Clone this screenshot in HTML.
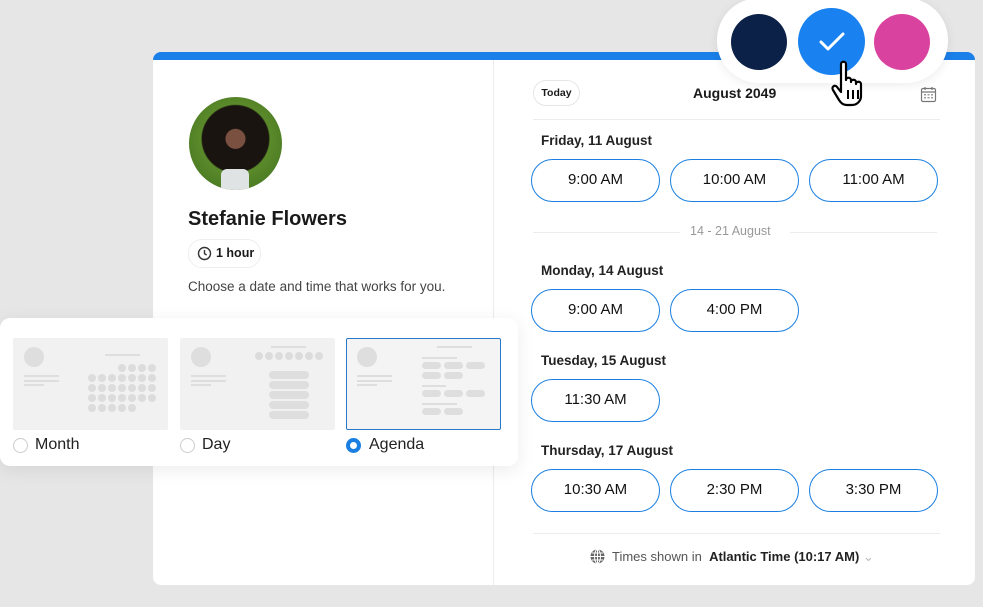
<!DOCTYPE html>
<html><head><style>
*{box-sizing:border-box;margin:0;padding:0}
body{width:983px;height:607px;background:#e6e6e7;font-family:"Liberation Sans",sans-serif;position:relative;overflow:hidden;color:#1a1a1a}
.abs{position:absolute}
.card{left:153px;top:52px;width:822px;height:533px;background:#fff;border-radius:8px;border-top:8px solid #1a7fe8;overflow:hidden}
.btn{position:absolute;width:129px;height:43px;border:1.5px solid #1a7fe0;border-radius:22px;text-align:center;line-height:40px;font-size:15px;color:#111}
.day{position:absolute;left:541px;font-size:13.5px;font-weight:bold;color:#222}
.line{position:absolute;height:1px;background:#ececec}
.th{position:absolute;top:338px;width:155px;height:92px;background:#f1f1f1;border-radius:2px}
.g{position:absolute;background:#dedede}
.radio{position:absolute;width:15px;height:15px;border:1px solid #ccc;border-radius:50%;background:#fff}
.lbl{position:absolute;font-size:16px;color:#222;top:436px}
</style></head><body>
<div class="abs card"></div>
<div class="abs" style="left:493px;top:60px;width:1px;height:525px;background:#ececec"></div>
<!-- avatar -->
<div class="abs" style="left:189px;top:97px;width:93px;height:93px;border-radius:50%;background:radial-gradient(circle at 50% 45%,#7a5040 0 14%,#1a1410 15% 48%,#5a8a2a 50%,#3f6e1d 100%);overflow:hidden">
<div class="abs" style="left:32px;top:72px;width:28px;height:25px;background:#dfe3e4;border-radius:6px 6px 0 0"></div>
</div>
<div class="abs" style="left:188px;top:208px;font-size:20px;font-weight:bold">Stefanie Flowers</div>
<div class="abs" style="left:188px;top:239px;width:73px;height:29px;border:1px solid #eee;border-radius:14px;font-size:12.5px;font-weight:bold;line-height:27px;padding-left:27px">1 hour</div>
<svg class="abs" style="left:197px;top:246px" width="15" height="15" viewBox="0 0 15 15"><circle cx="7.5" cy="7.5" r="6" fill="none" stroke="#333" stroke-width="1.4"/><path d="M7.5 4v3.7l2.2 1.3" fill="none" stroke="#333" stroke-width="1.4"/></svg>
<div class="abs" style="left:188px;top:279px;font-size:13.5px;color:#444">Choose a date and time that works for you.</div>

<!-- right header -->
<div class="abs" style="left:533px;top:80px;width:47px;height:26px;border:1px solid #e6e6e6;border-radius:13px;font-size:10.5px;font-weight:bold;text-align:center;line-height:24px">Today</div>
<div class="abs" style="left:693px;top:85px;font-size:14px;font-weight:bold">August 2049</div>
<svg class="abs" style="left:920px;top:86px" width="17" height="17" viewBox="0 0 17 17"><rect x="1.5" y="2.5" width="14" height="13" rx="1.5" fill="none" stroke="#777" stroke-width="1.2"/><path d="M1.5 6h14M5 1v3M12 1v3" stroke="#777" stroke-width="1.2"/><g fill="#999"><rect x="4" y="8" width="2" height="1.5"/><rect x="7.5" y="8" width="2" height="1.5"/><rect x="11" y="8" width="2" height="1.5"/><rect x="4" y="11" width="2" height="1.5"/><rect x="7.5" y="11" width="2" height="1.5"/><rect x="11" y="11" width="2" height="1.5"/></g></svg>
<div class="line" style="left:533px;top:119px;width:407px"></div>

<div class="day" style="top:133px">Friday, 11 August</div>
<div class="btn" style="left:531px;top:159px">9:00 AM</div>
<div class="btn" style="left:670px;top:159px">10:00 AM</div>
<div class="btn" style="left:809px;top:159px">11:00 AM</div>
<div class="line" style="left:533px;top:232px;width:147px"></div>
<div class="line" style="left:790px;top:232px;width:147px"></div>
<div class="abs" style="left:690px;top:224px;font-size:12.5px;color:#999">14 - 21 August</div>

<div class="day" style="top:263px">Monday, 14 August</div>
<div class="btn" style="left:531px;top:289px">9:00 AM</div>
<div class="btn" style="left:670px;top:289px">4:00 PM</div>
<div class="day" style="top:353px">Tuesday, 15 August</div>
<div class="btn" style="left:531px;top:379px">11:30 AM</div>
<div class="day" style="top:443px">Thursday, 17 August</div>
<div class="btn" style="left:531px;top:469px">10:30 AM</div>
<div class="btn" style="left:670px;top:469px">2:30 PM</div>
<div class="btn" style="left:809px;top:469px">3:30 PM</div>
<div class="line" style="left:533px;top:533px;width:407px"></div>
<svg class="abs" style="left:590px;top:549px" width="15" height="15" viewBox="0 0 15 15"><circle cx="7.5" cy="7.5" r="7" fill="#666"/><path d="M0.5 7.5h14M7.5 0.5v14M2 4h11M2 11h11" stroke="#fff" stroke-width="1"/><ellipse cx="7.5" cy="7.5" rx="3" ry="7" fill="none" stroke="#fff" stroke-width="1"/></svg>
<div class="abs" style="left:612px;top:549px;font-size:13px;color:#555">Times shown in &nbsp;<b style="color:#222">Atlantic Time (10:17 AM)</b> <span style="color:#bbb">&#8964;</span></div>

<!-- color picker -->
<div class="abs" style="left:717px;top:-2px;width:231px;height:85px;background:#fff;border-radius:42px;box-shadow:0 2px 10px rgba(0,0,0,.08)"></div>
<div class="abs" style="left:731px;top:14px;width:56px;height:56px;border-radius:50%;background:#0b2147"></div>
<div class="abs" style="left:798px;top:8px;width:67px;height:67px;border-radius:50%;background:#1a82f0"></div>
<svg class="abs" style="left:817px;top:30px" width="30" height="24" viewBox="0 0 30 24"><path d="M4 12l7 7L26 4" fill="none" stroke="#fff" stroke-width="3" stroke-linecap="round" stroke-linejoin="round"/></svg>
<div class="abs" style="left:874px;top:14px;width:56px;height:56px;border-radius:50%;background:#d9439f"></div>
<svg class="abs" style="left:830px;top:60px" width="44" height="48" viewBox="0 0 44 48"><path d="M11 4c0-3 5-3 5 0v16c0-3 5-3 5 0v2c0-3 5-3 5 0v2c0-3 5-3 5 0v12c0 5-4 9-9 9h-5c-4 0-6-2-8-5l-6-10c-2-3 2-6 4-3l4 5V4z" fill="#fff" stroke="#000" stroke-width="2.2" stroke-linejoin="round"/><path d="M18 30v9M23 30v9M28 30v9" stroke="#000" stroke-width="2"/></svg>

<!-- popup -->
<div class="abs" style="left:0;top:318px;width:518px;height:148px;background:#fff;border-radius:10px;box-shadow:0 4px 18px rgba(0,0,0,.08)"></div>
<div class="th" style="left:13px"></div>
<div class="th" style="left:180px"></div>
<div class="th" style="left:346px;border:1.5px solid #2a78c8;background:#f3f4f3"></div>
<!-- thumb details -->
<div class="g" style="left:24px;top:347px;width:20px;height:20px;border-radius:50%"></div>
<div class="g" style="left:24px;top:375px;width:35px;height:2px"></div><div class="g" style="left:24px;top:380px;width:35px;height:2px"></div><div class="g" style="left:24px;top:384px;width:20px;height:2px"></div>
<div class="g" style="left:105px;top:354px;width:35px;height:1.5px"></div>
<svg class="abs" style="left:86px;top:363px" width="70" height="50"><g fill="#dcdcdc">
<circle cx="36" cy="5" r="4"/><circle cx="46" cy="5" r="4"/><circle cx="56" cy="5" r="4"/><circle cx="66" cy="5" r="4"/>
<circle cx="6" cy="15" r="4"/><circle cx="16" cy="15" r="4"/><circle cx="26" cy="15" r="4"/><circle cx="36" cy="15" r="4"/><circle cx="46" cy="15" r="4"/><circle cx="56" cy="15" r="4"/><circle cx="66" cy="15" r="4"/>
<circle cx="6" cy="25" r="4"/><circle cx="16" cy="25" r="4"/><circle cx="26" cy="25" r="4"/><circle cx="36" cy="25" r="4"/><circle cx="46" cy="25" r="4"/><circle cx="56" cy="25" r="4"/><circle cx="66" cy="25" r="4"/>
<circle cx="6" cy="35" r="4"/><circle cx="16" cy="35" r="4"/><circle cx="26" cy="35" r="4"/><circle cx="36" cy="35" r="4"/><circle cx="46" cy="35" r="4"/><circle cx="56" cy="35" r="4"/><circle cx="66" cy="35" r="4"/>
<circle cx="6" cy="45" r="4"/><circle cx="16" cy="45" r="4"/><circle cx="26" cy="45" r="4"/><circle cx="36" cy="45" r="4"/><circle cx="46" cy="45" r="4"/></g></svg>
<div class="g" style="left:191px;top:347px;width:20px;height:20px;border-radius:50%"></div>
<div class="g" style="left:191px;top:375px;width:35px;height:2px"></div><div class="g" style="left:191px;top:380px;width:35px;height:2px"></div><div class="g" style="left:191px;top:384px;width:20px;height:2px"></div>
<div class="g" style="left:271px;top:346px;width:35px;height:1.5px"></div>
<svg class="abs" style="left:253px;top:351px" width="70" height="10"><g fill="#dcdcdc"><circle cx="6" cy="5" r="4"/><circle cx="16" cy="5" r="4"/><circle cx="26" cy="5" r="4"/><circle cx="36" cy="5" r="4"/><circle cx="46" cy="5" r="4"/><circle cx="56" cy="5" r="4"/><circle cx="66" cy="5" r="4"/></g></svg>
<div class="g" style="left:269px;top:371px;width:40px;height:8px;border-radius:4px"></div>
<div class="g" style="left:269px;top:381px;width:40px;height:8px;border-radius:4px"></div>
<div class="g" style="left:269px;top:391px;width:40px;height:8px;border-radius:4px"></div>
<div class="g" style="left:269px;top:401px;width:40px;height:8px;border-radius:4px"></div>
<div class="g" style="left:269px;top:411px;width:40px;height:8px;border-radius:4px"></div>
<div class="g" style="left:357px;top:347px;width:20px;height:20px;border-radius:50%"></div>
<div class="g" style="left:357px;top:375px;width:35px;height:2px"></div><div class="g" style="left:357px;top:380px;width:35px;height:2px"></div><div class="g" style="left:357px;top:384px;width:20px;height:2px"></div>
<div class="g" style="left:437px;top:346px;width:35px;height:1.5px"></div>
<div class="g" style="left:422px;top:357px;width:35px;height:1.5px"></div>
<div class="g" style="left:422px;top:362px;width:19px;height:7px;border-radius:4px"></div><div class="g" style="left:444px;top:362px;width:19px;height:7px;border-radius:4px"></div><div class="g" style="left:466px;top:362px;width:19px;height:7px;border-radius:4px"></div>
<div class="g" style="left:422px;top:372px;width:19px;height:7px;border-radius:4px"></div><div class="g" style="left:444px;top:372px;width:19px;height:7px;border-radius:4px"></div>
<div class="g" style="left:422px;top:385px;width:24px;height:1.5px"></div>
<div class="g" style="left:422px;top:390px;width:19px;height:7px;border-radius:4px"></div><div class="g" style="left:444px;top:390px;width:19px;height:7px;border-radius:4px"></div><div class="g" style="left:466px;top:390px;width:19px;height:7px;border-radius:4px"></div>
<div class="g" style="left:422px;top:403px;width:35px;height:1.5px"></div>
<div class="g" style="left:422px;top:408px;width:19px;height:7px;border-radius:4px"></div><div class="g" style="left:444px;top:408px;width:19px;height:7px;border-radius:4px"></div>

<div class="radio" style="left:13px;top:438px"></div><div class="lbl" style="left:35px">Month</div>
<div class="radio" style="left:180px;top:438px"></div><div class="lbl" style="left:202px">Day</div>
<div class="radio" style="left:346px;top:438px;border:4px solid #1a7fe0"></div><div class="lbl" style="left:369px">Agenda</div>
</body></html>
